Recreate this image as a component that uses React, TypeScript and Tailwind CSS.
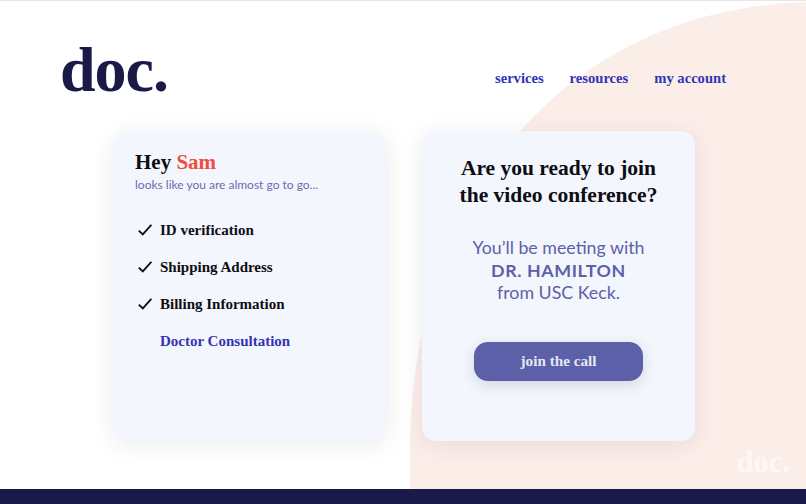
import React from 'react';

const serif = "font-['Liberation_Serif',serif] font-bold";
const futura = "font-['Lato','Noto_Sans',sans-serif]";

const CheckMark = () => (
  <svg viewBox="0 0 14 12" className="w-[14px] h-[12px] shrink-0">
    <path d="M0.8 6.6 L4.8 10.4 L13.4 0.8" fill="none" stroke="#0d0d12" strokeWidth="1.9" />
  </svg>
);

const steps = [
  { label: 'ID verification', done: true },
  { label: 'Shipping Address', done: true },
  { label: 'Billing Information', done: true },
  { label: 'Doctor Consultation', done: false },
];

const App: React.FC = () => {
  return (
    <div className="relative w-[806px] h-[504px] overflow-hidden bg-white flex flex-col border-t border-[#e6e6e6]">
      {/* peach background shape */}
      <svg viewBox="0 0 806 504" className="absolute left-0 top-[-1px] w-[806px] h-[504px]">
        <path d="M410 489 L410 440 C415 200 560 10 806 2 L806 489 Z" fill="#fbeee9" />
      </svg>

      <header className="relative flex items-center justify-between pl-[60px] pr-[80px] h-[130px]">
        <div className={`${serif} text-[64px] leading-none text-[#1a1947] tracking-[-1px] mt-[8px]`}>doc.</div>
        <nav className={`${serif} flex gap-[26px] text-[14.6px] text-[#3333b5] mt-[26px]`}>
          <span>services</span>
          <span>resources</span>
          <span>my account</span>
        </nav>
      </header>

      <main className="relative flex-1 flex gap-[35px] pl-[113px]">
        <section className="w-[274px] h-[310px] bg-[#f3f6fc] rounded-[16px] shadow-[0_4px_24px_rgba(40,40,80,0.09)] pl-[22px] pt-[17px]">
          <h2 className={`${serif} text-[21px] leading-[28px] text-[#0d0d12]`}>
            Hey <span className="text-[#ef4c3f]">Sam</span>
          </h2>
          <p className={`${futura} text-[12px] leading-[16px] text-[#6a6db5] mt-[1px]`}>
            looks like you are almost go to go...
          </p>
          <ul className="mt-[27px] flex flex-col gap-[17px]">
            {steps.map((step) => (
              <li key={step.label} className="flex items-center h-[20px]">
                <span className="w-[25px] pl-[3px] flex">{step.done && <CheckMark />}</span>
                <span className={`${serif} text-[15px] leading-[20px] ${step.done ? 'text-[#0d0d12]' : 'text-[#3333b5]'}`}>
                  {step.label}
                </span>
              </li>
            ))}
          </ul>
        </section>

        <section className="w-[273px] h-[310px] bg-[#f3f6fc] rounded-[14px] shadow-[0_4px_24px_rgba(40,40,80,0.09)] flex flex-col items-center pt-[24px]">
          <h2 className={`${serif} text-[21.5px] leading-[27px] text-[#0d0d12] text-center`}>
            Are you ready to join<br />the video conference?
          </h2>
          <p className={`${futura} text-[17.8px] leading-[22.5px] text-[#5c60a9] text-center mt-[27px]`}>
            You’ll be meeting with<br />
            <strong className="font-bold tracking-[0.6px]">DR. HAMILTON</strong><br />
            from USC Keck.
          </p>
          <button className={`${serif} mt-[38px] w-[169px] h-[39px] rounded-[14px] bg-[#5b60a8] text-[#e6e7f4] text-[15.2px] shadow-[0_4px_14px_rgba(50,50,100,0.16)]`}>
            join the call
          </button>
        </section>
      </main>

      <div className={`${serif} absolute right-[16px] bottom-[27px] text-[30.5px] leading-none text-white/60`}>doc.</div>

      <footer className="relative h-[15px] bg-[#1a1947]" />
    </div>
  );
};

export default App;
